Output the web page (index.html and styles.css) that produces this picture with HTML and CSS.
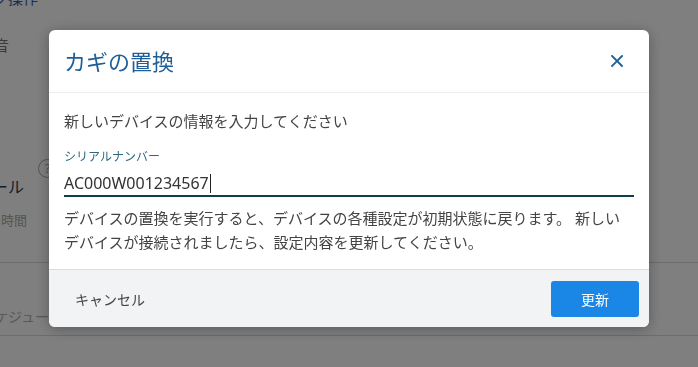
FILE: index.html
```html
<!DOCTYPE html>
<html lang="ja">
<head>
<meta charset="utf-8">
<title>カギの置換</title>
<link rel="stylesheet" href="styles.css">
</head>
<body>
<div class="page">
  <div class="bg-op">ック操作</div>
  <div class="bg-sound">通知音</div>
  <div class="bg-help"><span class="help-circle">?</span></div>
  <div class="bg-heading">スケジュール</div>
  <div class="bg-sub">までの時間</div>
  <div class="bg-rule"></div>
  <div class="bg-sched">スケジュール</div>
  <div class="bg-rule bg-rule-2"></div>
</div>

<div class="overlay">
  <div class="modal">
    <div class="modal-header">
      <h1 class="modal-title">カギの置換</h1>
      <button class="close-btn" aria-label="閉じる">
        <svg width="12" height="12" viewBox="0 0 12 12"><path d="M1 1 L11 11 M11 1 L1 11" stroke="#1f5f99" stroke-width="1.9" fill="none" stroke-linecap="square"/></svg>
      </button>
    </div>
    <div class="modal-body">
      <p class="intro">新しいデバイスの情報を入力してください</p>
      <div class="field">
        <div class="field-label">シリアルナンバー</div>
        <div class="field-input">AC000W001234567<span class="caret"></span></div>
      </div>
      <p class="note">デバイスの置換を実行すると、デバイスの各種設定が初期状態に戻ります。 新しい<br>デバイスが接続されましたら、設定内容を更新してください。</p>
    </div>
    <div class="modal-footer">
      <button class="btn-cancel">キャンセル</button>
      <button class="btn-primary">更新</button>
    </div>
  </div>
</div>
</body>
</html>
```

FILE: styles.css
```css
* { box-sizing: border-box; }
html, body { margin: 0; padding: 0; }
body {
  width: 698px;
  height: 367px;
  overflow: hidden;
  background: #fff;
  font-family: "Noto Sans", "Noto Sans CJK JP", sans-serif;
  color: #444;
}

/* background page */
.page { width: 698px; height: 367px; overflow: hidden; }
.bg-op { margin-top: -12px; margin-left: -22px; height: 20px; line-height: 20px; font-size: 15px; color: #1f64a8; white-space: nowrap; }
.bg-sound { margin-top: 27px; margin-left: -36px; height: 20px; line-height: 20px; font-size: 15px; color: #777; white-space: nowrap; }
.bg-help { margin-top: 101px; margin-left: 38px; height: 20px; }
.help-circle {
  display: inline-flex; align-items: center; justify-content: center;
  width: 19px; height: 19px; border: 1.5px solid #a8a8a8; border-radius: 50%;
  font-size: 13px; color: #a8a8a8; line-height: 1;
}
.bg-heading { margin-top: 0; margin-left: -71px; height: 22px; line-height: 22px; font-size: 16px; color: #2c3e50; white-space: nowrap; }
.bg-sub { margin-top: 13px; margin-left: -38px; height: 18px; line-height: 18px; font-size: 13px; color: #aaa; white-space: nowrap; }
.bg-rule { margin-top: 33px; height: 1px; background: #d8d8d8; }
.bg-sched { margin-top: 44px; margin-left: -20px; height: 20px; line-height: 20px; font-size: 14px; color: #b0b0b0; white-space: nowrap; }
.bg-rule-2 { margin-top: 8px; }

/* overlay + modal */
.overlay {
  position: fixed; inset: 0;
  background: rgba(0, 0, 0, 0.5);
  display: flex; justify-content: center; align-items: flex-start;
  padding-top: 30px;
}
.modal {
  width: 600px;
  background: #fff;
  border-radius: 6px;
  overflow: hidden;
  box-shadow: 0 2px 14px rgba(0, 0, 0, 0.3);
}
.modal-header {
  height: 63px;
  border-bottom: 1px solid #ececec;
  display: flex; align-items: center; justify-content: space-between;
  padding: 0 20px 0 15px;
}
.modal-title {
  margin: 0;
  font-size: 22px;
  font-weight: 400;
  color: #1f5f99;
  line-height: 30px;
}
.close-btn {
  width: 24px; height: 24px; padding: 0; border: 0; background: none;
  display: flex; align-items: center; justify-content: center;
}
.modal-body { padding: 17px 15px 15px; }
.intro { margin: 0; font-size: 15px; line-height: 22px; color: #444; }
.field { margin-top: 17px; }
.field-label { font-size: 12px; line-height: 16px; color: #2d6a7e; }
.field-input {
  padding-top: 6px;
  font-size: 16px; line-height: 24px; color: #333;
  border-bottom: 2px solid #0f3f4d;
}
.caret { display: inline-block; width: 1px; height: 19px; background: #222; vertical-align: -4px; margin-left: 1px; }
.note { margin: 9px 0 0; font-size: 15px; line-height: 24px; color: #444; }

.modal-footer {
  height: 58px;
  border-top: 1px solid #dcdcdc;
  background: #f2f3f5;
  display: flex; align-items: center; justify-content: space-between;
  padding: 0 10px;
}
.btn-cancel {
  border: 0; background: none; padding: 0 16px; height: 36px;
  font-family: inherit; font-size: 14px; color: #444;
}
.btn-primary {
  border: 0; width: 88px; height: 36px; border-radius: 3px;
  background: #1a86e5; color: #fff;
  font-family: inherit; font-size: 14px;
}
```
